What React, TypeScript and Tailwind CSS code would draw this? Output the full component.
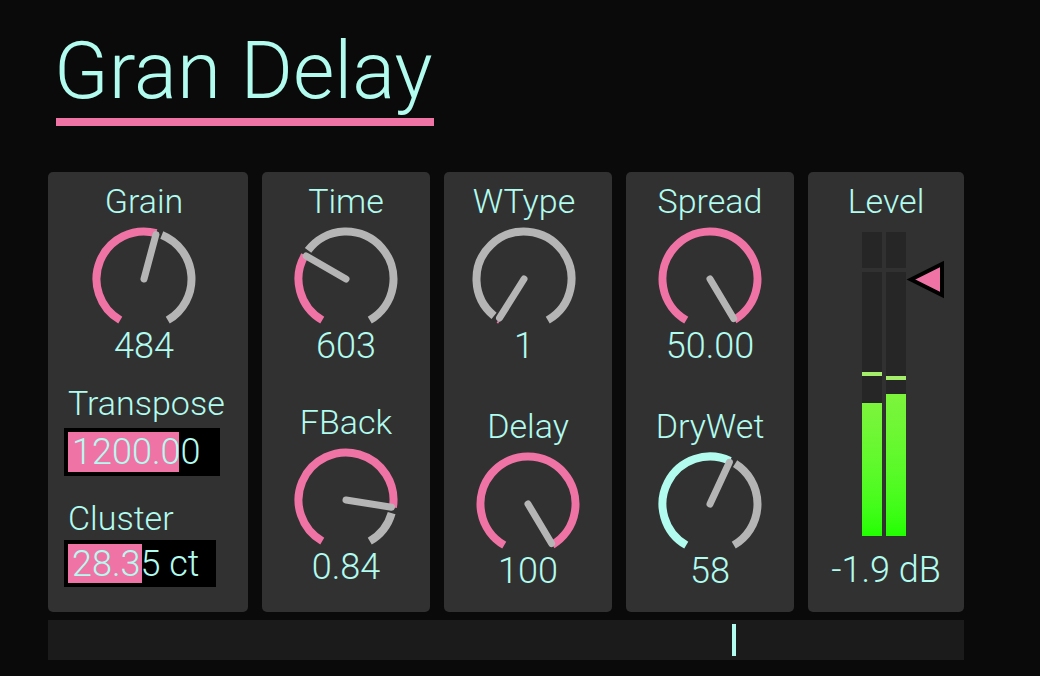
import React from 'react';

const CYAN = '#b2fcef';
const PINK = '#f073a6';
const GREY = '#b5b5b5';

const A0 = -150;
const A1 = 150;
const R = 47.5;
const CX = 55;
const CY = 55;

const pt = (a: number, r: number) => {
  const rad = (a * Math.PI) / 180;
  return [CX + r * Math.sin(rad), CY - r * Math.cos(rad)];
};

const arc = (a1: number, a2: number) => {
  const [x1, y1] = pt(a1, R);
  const [x2, y2] = pt(a2, R);
  const large = a2 - a1 > 180 ? 1 : 0;
  return `M ${x1} ${y1} A ${R} ${R} 0 ${large} 1 ${x2} ${y2}`;
};

const Knob: React.FC<{ v: number; fill?: string }> = ({ v, fill = PINK }) => {
  const a = A0 + v * (A1 - A0);
  const [nx, ny] = pt(a, 46);
  return (
    <svg width="110" height="104" viewBox="0 0 110 104" className="mt-[6px] block">
      {a > A0 + 1 && <path d={arc(A0, a)} stroke={fill} strokeWidth="8" fill="none" />}
      {a + 7 < A1 && <path d={arc(a + 7, A1)} stroke={GREY} strokeWidth="8" fill="none" />}
      <line x1={CX} y1={CY} x2={nx} y2={ny} stroke={GREY} strokeWidth="7" strokeLinecap="round" />
    </svg>
  );
};

const KnobUnit: React.FC<{ label: string; value: string; v: number; fill?: string; className?: string }> = ({
  label,
  value,
  v,
  fill,
  className = '',
}) => (
  <div className={`flex flex-col items-center ${className}`}>
    <div className="text-[34px] leading-[34px] h-[34px] whitespace-nowrap">{label}</div>
    <Knob v={v} fill={fill} />
    <div className="text-[36px] leading-[36px] h-[36px] whitespace-nowrap">{value}</div>
  </div>
);

const NumBox: React.FC<{ text: string; fill: number; className: string }> = ({ text, fill, className }) => (
  <div className={`relative bg-black p-1 flex items-center ${className}`}>
    <div className="absolute left-1 top-1 bottom-1 bg-[#f073a6]" style={{ width: fill }} />
    <div className="relative pl-1 text-[36px] leading-[36px] whitespace-nowrap">{text}</div>
  </div>
);

const Panel: React.FC<{ className?: string; children: React.ReactNode }> = ({ className = '', children }) => (
  <div className={`h-[440px] rounded-[5px] bg-[#313131] flex flex-col pt-3 ${className}`}>{children}</div>
);

const Meter: React.FC = () => {
  const ch = [
    { level: 133, peak: 100 },
    { level: 142, peak: 104 },
  ];
  return (
    <div className="mt-[14px] ml-[54px] self-start flex">
      <div className="flex gap-1">
        {ch.map((c, i) => (
          <div key={i} className="w-5 h-[304px] flex flex-col gap-1">
            <div className="h-9 bg-[#262626]" />
            <div className="relative flex-1 bg-[#262626]">
              <div className="absolute left-0 right-0 h-1 bg-[#a5ee6c]" style={{ top: c.peak }} />
              <div
                className="absolute left-0 right-0 bottom-0 bg-linear-to-b from-[#7cf43c] to-[#20ff00]"
                style={{ height: c.level }}
              />
            </div>
          </div>
        ))}
      </div>
      <svg width="44" height="48" viewBox="0 0 44 48" className="ml-[-2px] mt-[24px] block">
        <polygon points="7,23.5 38,8 38,39" fill={PINK} stroke="#000" strokeWidth="4" strokeLinejoin="miter" />
      </svg>
    </div>
  );
};

export default function App() {
  return (
    <div
      className="w-[1040px] h-[676px] bg-[#0a0a0a] flex flex-col pt-[31px] px-[48px] font-light font-[Roboto,'Liberation_Sans',sans-serif]"
      style={{ color: CYAN }}
    >
      <div className="ml-2 flex flex-col items-start">
        <div className="-ml-[2px] text-[80px] leading-[80px] whitespace-nowrap">Gran Delay</div>
        <div className="mt-[7px] w-[378px] h-2 bg-[#f073a6]" />
      </div>

      <div className="mt-[46px] flex gap-[14px]">
        <Panel className="w-[200px] pl-4 pr-6">
          <KnobUnit label="Grain" value="484" v={0.55} />
          <div className="mt-[22px] pl-1 text-[34px] leading-[34px]">Transpose</div>
          <NumBox text="1200.00" fill={111} className="mt-2 w-[156px] h-[48px]" />
          <div className="mt-[25px] pl-1 text-[34px] leading-[34px]">Cluster</div>
          <NumBox text="28.35 ct" fill={74} className="mt-[5px] w-[152px] h-[47px]" />
        </Panel>

        <Panel className="w-[168px] items-center">
          <KnobUnit label="Time" value="603" v={0.3} />
          <KnobUnit label="FBack" value="0.84" v={0.83} className="mt-[41px]" />
        </Panel>

        <Panel className="w-[168px] items-center">
          <KnobUnit label="WType" value="1" v={0.007} className="mr-2" />
          <KnobUnit label="Delay" value="100" v={0.997} className="mt-[45px]" />
        </Panel>

        <Panel className="w-[168px] items-center">
          <KnobUnit label="Spread" value="50.00" v={0.997} />
          <KnobUnit label="DryWet" value="58" v={0.583} fill={CYAN} className="mt-[45px]" />
        </Panel>

        <Panel className="w-[156px] items-center">
          <div className="text-[34px] leading-[34px] h-[34px]">Level</div>
          <Meter />
          <div className="mt-4 text-[36px] leading-[36px]">-1.9 dB</div>
        </Panel>
      </div>

      <div className="relative mt-2 w-[916px] h-10 bg-[#1b1b1b]">
        <div className="absolute left-[684px] top-1 w-1 h-8 bg-[#b2fcef]" />
      </div>
    </div>
  );
}
